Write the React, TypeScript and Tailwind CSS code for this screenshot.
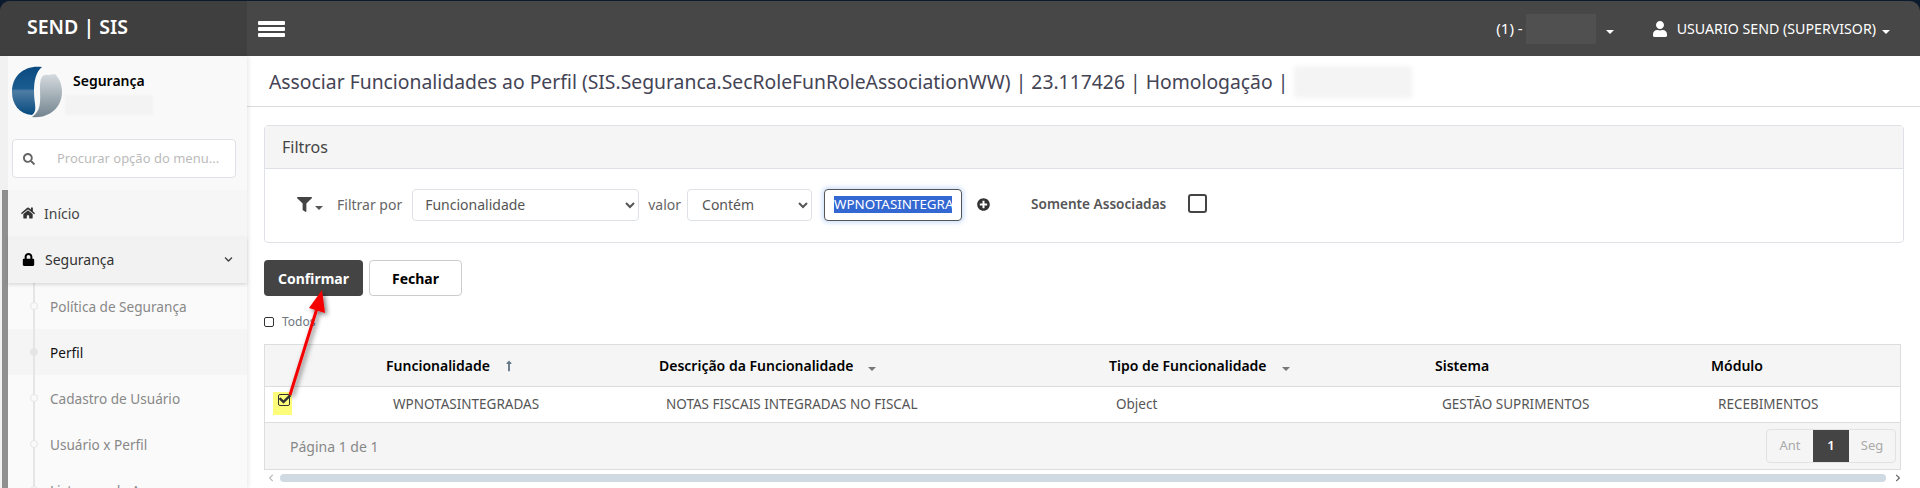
import { FaHome, FaLock, FaSearch, FaFilter, FaUser, FaPlusCircle, FaChevronDown, FaCheck, FaChevronLeft, FaChevronRight, FaLongArrowAltUp } from "react-icons/fa"

const font = { fontFamily: '"Noto Sans", Tahoma, sans-serif' }

function Caret({ color = "border-t-white" }: { color?: string }) {
    return <span className={`inline-block w-0 h-0 border-x-[4px] border-x-transparent border-t-[4px] ${color}`}></span>
}

function Logo() {
    return (
        <svg width="50" height="52" viewBox="0 0 50 52" className="shrink-0">
            <defs>
                <linearGradient id="logoBlue" x1="0" y1="0" x2="0" y2="1">
                    <stop offset="0" stopColor="#0b4a80" />
                    <stop offset="0.45" stopColor="#1b5c90" />
                    <stop offset="0.5" stopColor="#4f7da3" />
                    <stop offset="1" stopColor="#064a80" />
                </linearGradient>
                <linearGradient id="logoGray" x1="0" y1="0" x2="0" y2="1">
                    <stop offset="0" stopColor="#d5dbdf" />
                    <stop offset="1" stopColor="#73848f" />
                </linearGradient>
            </defs>
            <path d="M30 1 C12 -1 0 10 0 26 C0 38 7 48 20 49 C26 44 22 38 22 26 C22 14 24 6 30 1 Z" fill="url(#logoBlue)" />
            <path d="M36 9 C30 8 28 12 28 22 C28 34 30 44 20 51 C36 53 50 42 50 26 C50 18 47 12 43 8 Z" fill="url(#logoGray)" />
        </svg>
    )
}

function SubItem({ label, active }: { label: string, active?: boolean }) {
    return (
        <div className={`relative h-[46px] flex items-center pl-[42px] pt-[2px] text-[13.6px] ${active ? "bg-[#f5f5f5] text-[#111]" : "text-[#888]"}`}>
            <span className="absolute left-[25px] top-0 bottom-0 w-[2px] bg-[#e5e5e5]"></span>
            <span className={`absolute left-[22px] top-[19px] w-[8px] h-[8px] rounded-full border border-[#e5e5e5] ${active ? "bg-[#e5e5e5]" : "bg-[#fafafa]"}`}></span>
            {label}
        </div>
    )
}

function Sidebar() {
    return (
        <aside className="w-[247px] shrink-0 flex bg-[#f9f9f9] shadow-[2px_0_4px_rgba(0,0,0,0.08)] z-10 relative">
            <div className="w-[8px] shrink-0 bg-[#f1f1f1] pt-[134px]">
                <div className="w-[6px] ml-[2px] h-[300px] bg-[#8f8f8f]"></div>
            </div>
            <div className="flex-1 min-w-0">
                <div className="flex pl-[4px] pt-[10px] h-[68px]">
                    <Logo />
                    <div className="ml-[11px] mt-[5px]">
                        <div className="text-[14px] font-semibold leading-[20px] text-black">Segurança</div>
                        <div className="-ml-[8px] mt-[4px] w-[88px] h-[20px] bg-[#f3f3f3] blur-[1px]"></div>
                    </div>
                </div>
                <div className="ml-[4px] mt-[15px] w-[224px] h-[39px] bg-white border border-[#dee2e6] rounded-[4px] flex items-center pl-[10px]">
                    <FaSearch className="text-[#666] text-[12px]" />
                    <span className="ml-[22px] text-[13px] text-[#bbb]">Procurar opção do menu...</span>
                </div>
                <div className="h-[46px] mt-[12px] bg-[#f6f6f6] flex items-center pl-[13px] text-[14px] text-[#444]">
                    <FaHome className="text-[14px] text-[#333]" />
                    <span className="ml-[9px]">Início</span>
                </div>
                <div className="h-[47px] bg-[#f2f2f2] flex items-center pl-[14px] pr-[14px] text-[14px] text-[#333] shadow-[0_2px_3px_rgba(0,0,0,0.12)] relative z-10">
                    <FaLock className="text-[13px] text-black" />
                    <span className="ml-[10px] flex-1">Segurança</span>
                    <FaChevronDown className="text-[9px] text-[#444]" />
                </div>
                <div className="bg-[#fafafa]">
                    <SubItem label="Política de Segurança" />
                    <SubItem label="Perfil" active />
                    <SubItem label="Cadastro de Usuário" />
                    <SubItem label="Usuário x Perfil" />
                    <SubItem label="Listagem de Acessos" />
                </div>
            </div>
        </aside>
    )
}

function Filters() {
    return (
        <section className="border border-[#dee2e6] rounded-[4px] bg-white">
            <div className="h-[43px] bg-[#f5f5f5] border-b border-[#dee2e6] flex items-center pl-[17px] text-[16px] text-[#444]">Filtros</div>
            <div className="h-[73px] flex items-center pl-[32px] pb-[2px] text-[14px] text-[#666]">
                <FaFilter className="text-[15px] text-[#444]" />
                <span className="ml-[3px] mr-[14px] mb-[1px]"><Caret color="border-t-[#555]" /></span>
                <span>Filtrar por</span>
                <select defaultValue="f" className="ml-[10px] w-[227px] h-[32px] px-[8px] text-[14px] text-[#555] bg-white border border-[#dee2e6] rounded-[4px]">
                    <option value="f">Funcionalidade</option>
                </select>
                <span className="ml-[9px]">valor</span>
                <select defaultValue="c" className="ml-[6px] w-[125px] h-[32px] px-[10px] text-[14px] text-[#555] bg-white border border-[#dee2e6] rounded-[4px]">
                    <option value="c">Contém</option>
                </select>
                <div className="ml-[12px] w-[138px] h-[32px] bg-white border border-[#555] rounded-[4px] shadow-[0_0_4px_2px_rgba(120,170,240,0.35)] flex items-center pl-[9px] overflow-hidden">
                    <span className="bg-[#3367d1] text-white text-[13.4px] leading-[17px] w-[118px] overflow-hidden whitespace-nowrap">WPNOTASINTEGRADAS</span>
                </div>
                <FaPlusCircle className="ml-[15px] text-[13px] text-[#333]" />
                <span className="ml-[41px] font-semibold text-[13.6px] text-[#555]">Somente Associadas</span>
                <span className="ml-[22px] mb-[2px] w-[19px] h-[19px] border-2 border-[#444] rounded-[3px] bg-white"></span>
            </div>
        </section>
    )
}

const columns = [
    { head: "Funcionalidade", cell: "WPNOTASINTEGRADAS", w: "w-[273px]", sort: "up" },
    { head: "Descrição da Funcionalidade", cell: "NOTAS FISCAIS INTEGRADAS NO FISCAL", w: "w-[450px]", sort: "down" },
    { head: "Tipo de Funcionalidade", cell: "Object", w: "w-[326px]", sort: "down" },
    { head: "Sistema", cell: "GESTÃO SUPRIMENTOS", w: "w-[276px]", sort: "" },
    { head: "Módulo", cell: "RECEBIMENTOS", w: "flex-1", sort: "" },
]

function Grid() {
    return (
        <div className="border border-[#ddd] w-[1637px]">
            <div className="h-[42px] bg-[#f5f5f5] border-b border-[#ddd] flex items-center pl-[113px] text-[14px] font-semibold text-black">
                {columns.map((c) => (
                    <div key={c.head} className={`${c.w} pl-[8px] flex items-center`}>
                        {c.head}
                        {c.sort === "up" && <FaLongArrowAltUp className="ml-[13px] text-[12px] text-[#678]" />}
                        {c.sort === "down" && <span className="ml-[15px] mb-[1px]"><Caret color="border-t-[#777]" /></span>}
                    </div>
                ))}
            </div>
            <div className="h-[36px] bg-white border-b border-[#ddd] flex items-center pl-[113px] text-[13.5px] text-[#555] relative">
                <div className="absolute left-[8px] top-[5px] w-[19px] h-[23px] bg-[#fdfd7a] pl-[5px] pt-[2px]">
                    <div className="w-[12px] h-[12px] border border-[#333] rounded-[2px] relative">
                        <FaCheck className="absolute left-[0px] -top-[2px] text-[12px] text-[#333]" />
                    </div>
                </div>
                {columns.map((c) => (
                    <div key={c.head} className={`${c.w} pl-[15px]`}>{c.cell}</div>
                ))}
            </div>
            <div className="h-[46px] bg-[#f5f5f5] flex items-center justify-between pl-[25px] pr-[4px] text-[14px] text-[#888]">
                <span>Página 1 de 1</span>
                <div className="h-[34px] flex border border-[#e2e2e2] rounded-[4px] text-[13px] text-[#aaa]">
                    <span className="w-[46px] flex items-center justify-center">Ant</span>
                    <span className="w-[36px] flex items-center justify-center bg-[#444] text-white font-semibold">1</span>
                    <span className="w-[46px] flex items-center justify-center">Seg</span>
                </div>
            </div>
        </div>
    )
}

export default function App() {
    return (
        <div className="h-[488px] w-[1920px] overflow-hidden bg-[#0c1a2e] pt-[1px] relative" style={font}>
            <header className="h-[55px] flex rounded-t-[10px] overflow-hidden bg-[#474747] text-white">
                <div className="w-[247px] shrink-0 bg-[#3f3f3f] flex items-center pl-[27px] pb-[3px] text-[19.5px] font-semibold">SEND | SIS</div>
                <div className="ml-[11px] flex flex-col justify-center gap-[2px]">
                    <span className="w-[27px] h-[4px] bg-white rounded-[1px]"></span>
                    <span className="w-[27px] h-[4px] bg-white rounded-[1px]"></span>
                    <span className="w-[27px] h-[4px] bg-white rounded-[1px]"></span>
                </div>
                <div className="ml-auto flex items-center text-[14.2px] pr-[30px]">
                    <span className="text-[15px]">(1) -</span>
                    <span className="ml-[3px] w-[70px] h-[30px] bg-[#505050]"></span>
                    <span className="ml-[10px]"><Caret /></span>
                    <FaUser className="ml-[38px] text-[16px]" />
                    <span className="ml-[9px]">USUARIO SEND (SUPERVISOR)</span>
                    <span className="ml-[6px]"><Caret /></span>
                </div>
            </header>
            <div className="flex h-[432px] bg-white">
                <Sidebar />
                <main className="flex-1 min-w-0">
                    <div className="h-[51px] border-b border-[#ddd] flex items-center pl-[22px] pt-[1px] text-[19.34px] text-[#445]">
                        <span>Associar Funcionalidades ao Perfil (SIS.Seguranca.SecRoleFunRoleAssociationWW) | 23.117426 | Homologação |</span>
                        <span className="ml-[6px] w-[118px] h-[32px] bg-[#f4f4f4] blur-[2px]"></span>
                    </div>
                    <div className="pl-[17px] pr-[16px] pt-[18px]">
                        <Filters />
                        <div className="flex gap-[6px] mt-[17px]">
                            <button className="w-[99px] h-[36px] bg-[#444] rounded-[4px] text-white text-[14px] font-bold">Confirmar</button>
                            <button className="w-[93px] h-[36px] bg-white border border-[#ccc] rounded-[4px] text-black text-[14px] font-bold">Fechar</button>
                        </div>
                        <div className="flex items-center mt-[18px] h-[16px] text-[12px] text-[#6c757d]">
                            <span className="w-[10px] h-[10px] border border-[#333] rounded-[2px]"></span>
                            <span className="ml-[8px]">Todos</span>
                        </div>
                        <div className="mt-[14px]"><Grid /></div>
                        <div className="flex items-center mt-[4px] w-[1640px]">
                            <FaChevronLeft className="text-[8px] text-[#bbb] ml-[3px]" />
                            <div className="ml-[5px] w-[1606px] h-[8px] rounded-full bg-[#d0dae3]"></div>
                            <FaChevronRight className="ml-[8px] text-[8px] text-[#666]" />
                        </div>
                    </div>
                </main>
            </div>
            {/* annotation pasted on the screenshot */}
            <svg className="absolute left-0 top-0 z-20 pointer-events-none" width="1920" height="488">
                <defs>
                    <filter id="arrowShadow" x="-50%" y="-50%" width="200%" height="200%">
                        <feDropShadow dx="2" dy="2" stdDeviation="2.5" floodColor="#000" floodOpacity="0.55" />
                    </filter>
                </defs>
                <g filter="url(#arrowShadow)">
                    <line x1="290" y1="395" x2="318" y2="305" stroke="#f40000" strokeWidth="3" />
                    <polygon points="322,290 325,313 309,308" fill="#f40000" />
                </g>
            </svg>
        </div>
    )
}
